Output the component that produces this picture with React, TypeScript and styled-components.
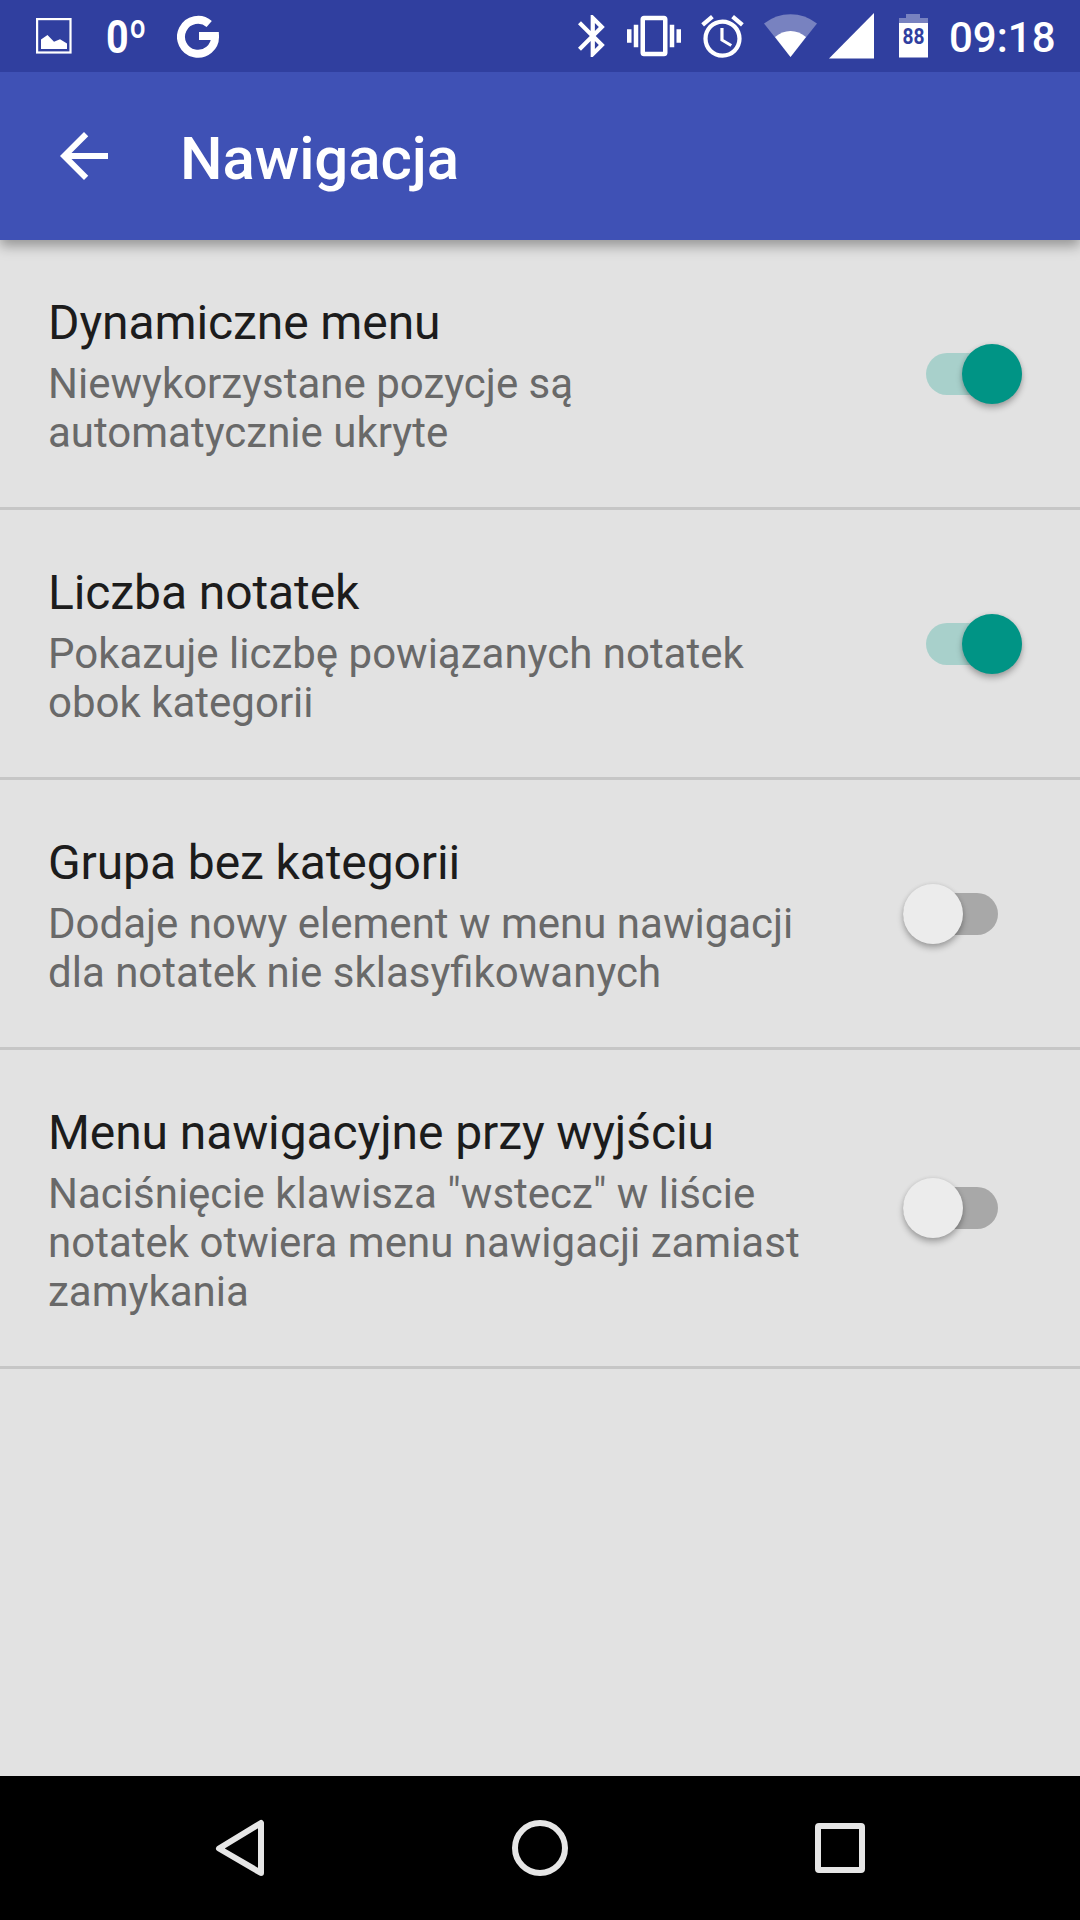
import React, { useState } from "react";
import styled, { createGlobalStyle } from "styled-components";

const GlobalStyle = createGlobalStyle`
  *, *::before, *::after { box-sizing: border-box; }
  body {
    margin: 0;
    background: #e2e2e2;
    font-family: Roboto, "Noto Sans", sans-serif;
  }
`;

const Screen = styled.div`
  display: flex;
  flex-direction: column;
  width: 1080px;
  height: 1920px;
  overflow: hidden;
  background: #e2e2e2;
`;

const StatusBar = styled.header`
  display: flex;
  flex: none;
  align-items: center;
  justify-content: space-between;
  height: 72px;
  padding: 0 25px 0 36px;
  background: #303f9f;
  color: #fff;
  z-index: 2;
`;

const StatusGroup = styled.div`
  display: flex;
  align-items: center;
  height: 72px;
`;

const StatusIcon = styled.svg<{ $before?: number }>`
  display: block;
  flex: none;
  margin-left: ${({ $before = 0 }) => $before}px;
  fill: #fff;
`;

const Temperature = styled.span`
  width: 40px;
  margin-left: 34px;
  padding-top: 2px;
  font-size: 47px;
  font-weight: 700;
  line-height: 72px;
  white-space: nowrap;
  transform: scaleX(0.84);
  transform-origin: left center;
`;

const BatteryLevel = styled.text`
  fill: #303f9f;
  font-size: 22px;
  font-weight: 700;
`;

const Clock = styled.time`
  width: 106px;
  margin-left: 21px;
  padding-top: 3px;
  font-size: 42px;
  font-weight: 500;
  line-height: 74px;
  white-space: nowrap;
`;

const AppBar = styled.div`
  display: flex;
  flex: none;
  align-items: center;
  height: 168px;
  padding-left: 48px;
  background: #3f51b5;
  color: #fff;
  box-shadow: 0 6px 12px rgba(0, 0, 0, 0.34);
  z-index: 1;
`;

const IconButton = styled.button`
  display: grid;
  place-items: center;
  padding: 0;
  border: 0;
  background: none;
  cursor: pointer;
`;

const Title = styled.h1`
  margin: 6px 0 0 60px;
  font-size: 60px;
  font-weight: 500;
  letter-spacing: -0.1px;
  line-height: 70px;
`;

const PreferenceList = styled.main`
  flex: 1;
`;

const Preference = styled.label`
  display: flex;
  align-items: center;
  padding: 54px 52px 50px 48px;
  border-bottom: 3px solid #c6c6c6;
  cursor: pointer;
`;

const PreferenceText = styled.div`
  width: 768px;
  margin-right: auto;
`;

const PreferenceTitle = styled.div`
  margin-bottom: 8px;
  color: #1c1c1c;
  font-size: 48px;
  letter-spacing: -0.1px;
  line-height: 57px;
`;

const Summary = styled.div`
  color: #696969;
  font-size: 42px;
  line-height: 49px;
`;

const Checkbox = styled.input`
  appearance: none;
  flex: none;
  width: 0;
  height: 0;
  margin: 0;
  opacity: 0;
`;

const Switch = styled.span<{ $on: boolean }>`
  display: flex;
  flex: none;
  align-items: center;
  justify-content: ${({ $on }) => ($on ? "flex-end" : "flex-start")};
  width: ${({ $on }) => ($on ? 95.5 : 95.5)}px;
  height: 42px;
  margin: 0 ${({ $on }) => ($on ? 6.5 : 30)}px 4px 0;
  border-radius: 21px;
  background: ${({ $on }) => ($on ? "#a8d0cb" : "#a8a8a8")};
`;

const Thumb = styled.span<{ $on: boolean }>`
  flex: none;
  width: 60px;
  height: 60px;
  border-radius: 50%;
  background: ${({ $on }) => ($on ? "#009485" : "#ececec")};
  box-shadow: 0 4px 6px rgba(0, 0, 0, 0.28), 0 0 4px rgba(0, 0, 0, 0.08);
`;

const NavigationBar = styled.nav`
  display: flex;
  flex: none;
  align-items: center;
  justify-content: center;
  gap: 228px;
  height: 144px;
  background: #000;
`;

const NavIcon = styled.svg`
  display: block;
  fill: none;
  stroke: #e6e6e6;
  stroke-width: 6;
  stroke-linejoin: round;
`;

const preferences = [
  { title: "Dynamiczne menu", summary: "Niewykorzystane pozycje są automatycznie ukryte", on: true },
  { title: "Liczba notatek", summary: "Pokazuje liczbę powiązanych notatek obok kategorii", on: true },
  { title: "Grupa bez kategorii", summary: "Dodaje nowy element w menu nawigacji dla notatek nie sklasyfikowanych", on: false },
  { title: "Menu nawigacyjne przy wyjściu", summary: "Naciśnięcie klawisza \"wstecz\" w liście notatek otwiera menu nawigacji zamiast zamykania", on: false },
];

function PreferenceRow({ title, summary, on }: { title: string; summary: string; on: boolean }) {
  const [checked, setChecked] = useState(on);
  return (
    <Preference>
      <PreferenceText>
        <PreferenceTitle>{title}</PreferenceTitle>
        <Summary>{summary}</Summary>
      </PreferenceText>
      <Checkbox type="checkbox" checked={checked} onChange={() => setChecked(!checked)} />
      <Switch $on={checked}>
        <Thumb $on={checked} />
      </Switch>
    </Preference>
  );
}

export default function App() {
  return (
    <Screen>
      <GlobalStyle />
      <StatusBar>
        <StatusGroup>
          <StatusIcon width="36" height="36" viewBox="0 0 36 36">
            <rect x="1.1" y="1.1" width="33.4" height="33.4" fill="none" stroke="#fff" strokeWidth="2.2" />
            <path d="M5 31V21.5L11.5 17L18 23.7L24 21.3L31 25.5V31Z" />
          </StatusIcon>
          <Temperature>0º</Temperature>
          <StatusIcon $before={31} width="43" height="44" viewBox="0 0 43 44">
            <path d="M32.2 10A17 17 0 1 0 38 22H22" fill="none" stroke="#fff" strokeWidth="8" />
          </StatusIcon>
        </StatusGroup>
        <StatusGroup>
          <StatusIcon width="27" height="44" viewBox="5 1.8 12.8 20.4">
            <path d="M17.71 7.71L12 2h-1v7.59L6.41 5 5 6.41 10.59 12 5 17.59 6.41 19 11 14.41V22h1l5.71-5.71-4.3-4.29 4.3-4.29zM13 5.83l1.88 1.88L13 9.59V5.83zm1.88 10.46L13 18.17v-3.76l1.88 1.88z" />
          </StatusIcon>
          <StatusIcon $before={22} width="54" height="54" viewBox="0 0 24 24">
            <path d="M0 15h2V9H0v6zm3 2h2V7H3v10zm19-8v6h2V9h-2zm-3 8h2V7h-2v10zM16.5 3h-9C6.67 3 6 3.67 6 4.5v15c0 .83.67 1.5 1.5 1.5h9c.83 0 1.5-.67 1.5-1.5v-15c0-.83-.67-1.5-1.5-1.5zM16 19H8V5h8v14z" />
          </StatusIcon>
          <StatusIcon $before={16} width="51" height="51" viewBox="0 0 24 24">
            <path d="M22 5.72l-4.6-3.86-1.29 1.53 4.6 3.86L22 5.72zM7.88 3.39L6.6 1.86 2 5.71l1.29 1.53 4.59-3.85zM12.5 8H11v6l4.75 2.85.75-1.23-4-2.37V8zM12 4c-4.97 0-9 4.03-9 9s4.02 9 9 9a9 9 0 0 0 0-18zm0 16c-3.87 0-7-3.13-7-7s3.13-7 7-7 7 3.13 7 7-3.13 7-7 7z" />
          </StatusIcon>
          <StatusIcon $before={16} width="53" height="44" viewBox="0 0 53 44">
            <path d="M0 9.5Q12 0.3 26.5 0.3T53 9.5L26.5 43Z" opacity=".35" />
            <path d="M11 23Q18 17 26.5 17T42 23L26.5 43Z" />
          </StatusIcon>
          <StatusIcon $before={12} width="45" height="46" viewBox="0 0 45 46">
            <path d="M0 45.5L45 0V45.5Z" />
          </StatusIcon>
          <StatusIcon $before={25} width="29" height="44" viewBox="0 0 29 44">
            <path d="M7 0H21V4H29V9H0V4H7Z" opacity=".35" />
            <path d="M0 9H29V43.5H0Z" />
            <BatteryLevel x="14.5" y="30" textAnchor="middle" textLength="22" lengthAdjust="spacingAndGlyphs">88</BatteryLevel>
          </StatusIcon>
          <Clock>09:18</Clock>
        </StatusGroup>
      </StatusBar>
      <AppBar>
        <IconButton aria-label="Wstecz">
          <StatusIcon width="72" height="72" viewBox="0 0 24 24">
            <path d="M20 11H7.83l5.59-5.59L12 4l-8 8 8 8 1.41-1.41L7.83 13H20v-2z" />
          </StatusIcon>
        </IconButton>
        <Title>Nawigacja</Title>
      </AppBar>
      <PreferenceList>
        {preferences.map((item) => (
          <PreferenceRow key={item.title} {...item} />
        ))}
      </PreferenceList>
      <NavigationBar>
        <IconButton aria-label="Wstecz">
          <NavIcon width="72" height="72" viewBox="0 0 72 72">
            <path d="M15 36.5L57 11V61Z" />
          </NavIcon>
        </IconButton>
        <IconButton aria-label="Ekran główny">
          <NavIcon width="72" height="72" viewBox="0 0 72 72">
            <circle cx="36" cy="36" r="25" />
          </NavIcon>
        </IconButton>
        <IconButton aria-label="Ostatnie">
          <NavIcon width="72" height="72" viewBox="0 0 72 72">
            <rect x="14" y="14" width="44" height="44" rx="1" />
          </NavIcon>
        </IconButton>
      </NavigationBar>
    </Screen>
  );
}
